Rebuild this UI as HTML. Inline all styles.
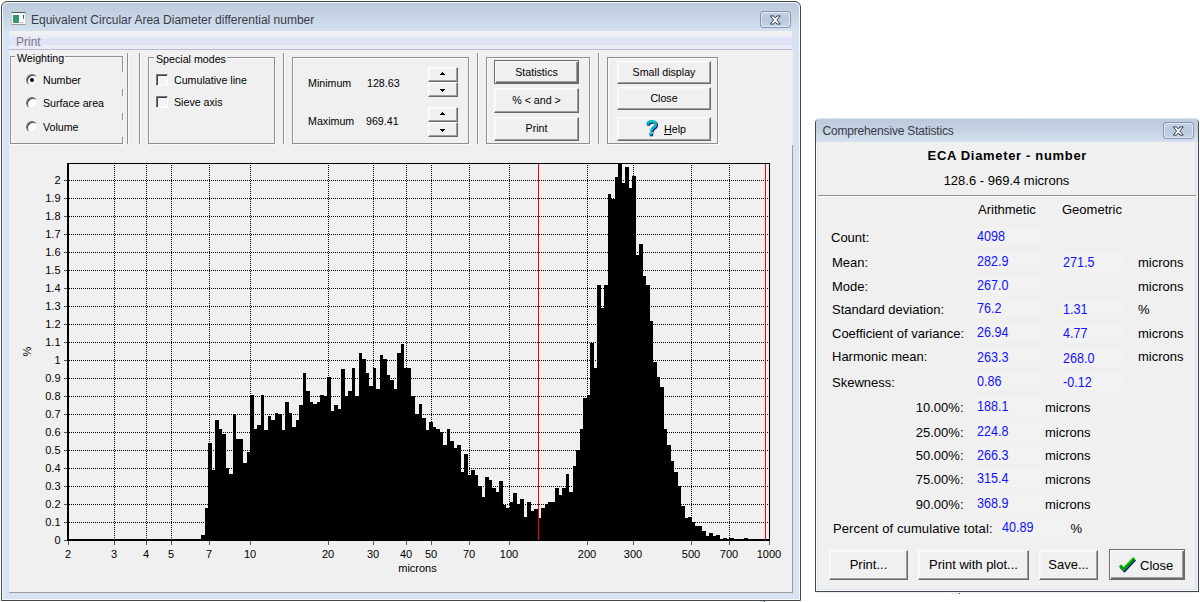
<!DOCTYPE html>
<html><head><meta charset="utf-8"><title>Equivalent Circular Area Diameter differential number</title>
<style>
html,body{margin:0;padding:0;background:#fff;}
body{width:1200px;height:602px;position:relative;overflow:hidden;font-family:"Liberation Sans",Arial,sans-serif;}
.t{position:absolute;white-space:nowrap;line-height:1;}
.win{position:absolute;box-sizing:border-box;border:1px solid #474747;background:#d7e3f2;}
#w1{left:1px;top:1px;width:800px;height:600px;border-radius:6px 6px 0 0;box-shadow:inset 0 0 0 1px rgba(255,255,255,.75);}
#w1 .tb{position:absolute;left:1px;top:1px;right:1px;height:29px;border-radius:5px 5px 0 0;background:linear-gradient(#bccbdd,#c6d4e5 45%,#d6e2f0);}
.abs{position:absolute;}
#menu{position:absolute;left:9px;top:31px;width:783px;height:19px;background:linear-gradient(#f1f1f2 0,#f1f1f2 21%,#e8ebf8 22%,#e8ebf8 36%,#dfe3f5 37%,#dfe3f5 74%,#eaecf8 75%,#eaecf8 94%,#b8bbcf 95%,#b8bbcf 100%);}
#c1{position:absolute;left:9px;top:50px;width:784px;height:543px;background:#f0f0f0;}
#cpanel{position:absolute;left:9px;top:145px;width:784px;height:448px;border-right:1px solid #9c9c9c;border-bottom:1px solid #9c9c9c;box-sizing:border-box;}
.gb{position:absolute;box-sizing:border-box;border:1px solid #8f8f8f;box-shadow:1px 1px 0 #fbfbfb,inset 1px 1px 0 #fbfbfb;}
.vsep{position:absolute;width:1px;background:#8f8f8f;box-shadow:1px 0 0 #fbfbfb;}
.leg{position:absolute;background:#f0f0f0;}
.radio{position:absolute;width:12px;height:12px;box-sizing:border-box;border-radius:50%;background:#fff;border:1px solid;border-color:#7a7a7a #e8e8e8 #e8e8e8 #7a7a7a;box-shadow:inset 1px 1px 0 #404040;}
.radio i{position:absolute;left:3px;top:3px;width:4px;height:4px;border-radius:50%;background:#000;}
.chk{position:absolute;width:12px;height:12px;box-sizing:border-box;background:#f4f4f4;border:1px solid;border-color:#7a7a7a #fff #fff #7a7a7a;box-shadow:inset 1px 1px 0 #404040;}
.btn{position:absolute;box-sizing:border-box;background:#f0f0f0;border:1px solid;border-color:#fcfcfc #6a6a6a #6a6a6a #fcfcfc;box-shadow:inset -1px -1px 0 #9d9d9d,inset 1px 1px 0 #f6f6f6;font-size:10.67px;text-align:center;white-space:nowrap;color:#000;}
.btn.def{border-color:#6c6c6c;box-shadow:inset 1px 1px 0 #fcfcfc,inset -1px -1px 0 #6a6a6a,inset -2px -2px 0 #9d9d9d;}
.btn.big{font-size:13px;}
.btn span{display:inline-block;vertical-align:middle;line-height:1;}
.btn svg{vertical-align:middle;}
.spin{line-height:0;}
.chart{position:absolute;left:0;top:0;}
.ax text{font-family:"Liberation Sans",Arial,sans-serif;font-size:11px;fill:#000;}
.cb{position:absolute;box-sizing:border-box;border:1px solid #8593b2;border-radius:3px;box-shadow:inset 0 0 0 1px rgba(255,255,255,.55);background:linear-gradient(#c3d1e3,#b9c9de 50%,#c6d4e6);display:flex;align-items:center;justify-content:center;}
#w2{left:815px;top:118px;width:384px;height:474px;border-radius:5px 5px 0 0;border-top-color:#dfe6ee;background:#dbe6f4;box-shadow:inset 0 0 0 1px rgba(255,255,255,.8);}
#w2 .tb{position:absolute;left:0;top:0;right:0;height:23px;border-radius:4px 4px 0 0;background:linear-gradient(#bccbdc,#c4d2e3 50%,#d6e2f0);}
#c2{position:absolute;left:2px;top:23px;width:377px;height:447px;background:#f0f0f0;}
.hsep{position:absolute;height:1px;background:#8f8f8f;box-shadow:0 1px 0 #fbfbfb;}
.vf{position:absolute;background:#f2f2f2;}
</style></head><body>
<div class="win" id="w1">
 <div class="tb"></div>
</div>
<div id="menu"></div>
<div id="c1"></div>
<div id="cpanel"></div>
<div class="abs" style="left:11px;top:12px;width:15px;height:13px;box-sizing:border-box;background:#fdfdfd;border-top:1px solid #555;border-bottom:1px solid #999;border-left:1px solid #ccc;border-right:1px solid #ccc;">
  <div class="abs" style="left:1px;top:2px;width:6px;height:8px;background:linear-gradient(#3a8a8a,#3aa060);"></div>
  <div class="abs" style="left:11px;top:2px;width:1px;height:4px;background:linear-gradient(#2244aa,#22aa44);"></div>
  <div class="abs" style="left:8px;top:9px;width:3px;height:1px;background:#bbb;"></div>
</div>
<span class="t" style="font-size:12px;top:14px;color:#3b3b46;left:31px;">Equivalent Circular Area Diameter differential number</span>
<div class="cb" style="left:760px;top:11px;width:31px;height:17px"><svg width="12.500" height="10" viewBox="0 0 13 11"><path d="M1 1h3.600L6.500 3.300 8.400 1H12L8.300 5.500 12 10H8.400L6.500 7.700 4.600 10H1L4.700 5.500z" fill="#fff" stroke="#363e50" stroke-width="1.100" stroke-linejoin="round"/></svg></div>
<span class="t" style="font-size:12px;top:36px;color:#7f7888;left:16px;">Print</span>
<svg class="chart" width="800" height="602" viewBox="0 0 800 602" shape-rendering="crispEdges">
<g stroke="#000" stroke-width="1" stroke-dasharray="1 1"><line x1="114.5" y1="165" x2="114.5" y2="539"/><line x1="146.5" y1="165" x2="146.5" y2="539"/><line x1="171.5" y1="165" x2="171.5" y2="539"/><line x1="209.5" y1="165" x2="209.5" y2="539"/><line x1="250.5" y1="165" x2="250.5" y2="539"/><line x1="328.5" y1="165" x2="328.5" y2="539"/><line x1="373.5" y1="165" x2="373.5" y2="539"/><line x1="406.5" y1="165" x2="406.5" y2="539"/><line x1="431.5" y1="165" x2="431.5" y2="539"/><line x1="469.5" y1="165" x2="469.5" y2="539"/><line x1="509.5" y1="165" x2="509.5" y2="539"/><line x1="587.5" y1="165" x2="587.5" y2="539"/><line x1="633.5" y1="165" x2="633.5" y2="539"/><line x1="691.5" y1="165" x2="691.5" y2="539"/><line x1="729.5" y1="165" x2="729.5" y2="539"/><line x1="69" y1="522.5" x2="768" y2="522.5"/><line x1="69" y1="504.5" x2="768" y2="504.5"/><line x1="69" y1="486.5" x2="768" y2="486.5"/><line x1="69" y1="468.5" x2="768" y2="468.5"/><line x1="69" y1="450.5" x2="768" y2="450.5"/><line x1="69" y1="432.5" x2="768" y2="432.5"/><line x1="69" y1="414.5" x2="768" y2="414.5"/><line x1="69" y1="396.5" x2="768" y2="396.5"/><line x1="69" y1="378.5" x2="768" y2="378.5"/><line x1="69" y1="360.5" x2="768" y2="360.5"/><line x1="69" y1="342.5" x2="768" y2="342.5"/><line x1="69" y1="324.5" x2="768" y2="324.5"/><line x1="69" y1="306.5" x2="768" y2="306.5"/><line x1="69" y1="288.5" x2="768" y2="288.5"/><line x1="69" y1="270.5" x2="768" y2="270.5"/><line x1="69" y1="252.5" x2="768" y2="252.5"/><line x1="69" y1="234.5" x2="768" y2="234.5"/><line x1="69" y1="216.5" x2="768" y2="216.5"/><line x1="69" y1="198.5" x2="768" y2="198.5"/><line x1="69" y1="180.5" x2="768" y2="180.5"/></g>
<path d="M201 535H205V541H201ZM205 508H208V541H205ZM208 443H212V541H208ZM212 470H215V541H212ZM215 420H219V541H215ZM219 429H222V541H219ZM222 434H226V541H222ZM226 468H229V541H226ZM229 474H233V541H229ZM233 414H236V541H233ZM236 439H240V541H236ZM240 439H243V541H240ZM243 463H247V541H243ZM247 452H250V541H247ZM250 395H254V541H250ZM254 429H257V541H254ZM257 425H261V541H257ZM261 395H264V541H261ZM264 430H268V541H264ZM268 416H271V541H268ZM271 420H275V541H271ZM275 413H278V541H275ZM278 414H282V541H278ZM282 430H285V541H282ZM285 402H289V541H285ZM289 413H292V541H289ZM292 427H296V541H292ZM296 420H299V541H296ZM299 405H303V541H299ZM303 373H306V541H303ZM306 391H310V541H306ZM310 402H313V541H310ZM313 404H317V541H313ZM317 402H320V541H317ZM320 395H324V541H320ZM324 396H327V541H324ZM327 377H331V541H327ZM331 411H334V541H331ZM334 405H338V541H334ZM338 409H341V541H338ZM341 369H345V541H341ZM345 396H348V541H345ZM348 391H352V541H348ZM352 368H355V541H352ZM355 396H359V541H355ZM359 353H362V541H359ZM362 359H366V541H362ZM366 373H369V541H366ZM369 386H373V541H369ZM373 368H376V541H373ZM376 389H380V541H376ZM380 355H383V541H380ZM383 359H387V541H383ZM387 375H390V541H387ZM390 380H394V541H390ZM394 389H397V541H394ZM397 353H401V541H397ZM401 344H404V541H401ZM404 368H408V541H404ZM408 368H411V541H408ZM411 396H415V541H411ZM415 414H419V541H415ZM419 404H422V541H419ZM422 418H426V541H422ZM426 430H429V541H426ZM429 422H433V541H429ZM433 427H436V541H433ZM436 429H440V541H436ZM440 432H443V541H440ZM443 445H447V541H443ZM447 429H450V541H447ZM450 441H454V541H450ZM454 448H457V541H454ZM457 445H461V541H457ZM461 472H464V541H461ZM464 454H468V541H464ZM468 475H471V541H468ZM471 470H475V541H471ZM475 475H478V541H475ZM478 486H482V541H478ZM482 497H485V541H482ZM485 477H489V541H485ZM489 480H492V541H489ZM492 488H496V541H492ZM496 492H499V541H496ZM499 481H503V541H499ZM503 505H506V541H503ZM506 508H510V541H506ZM510 502H513V541H510ZM513 493H517V541H513ZM517 504H520V541H517ZM520 499H524V541H520ZM524 517H527V541H524ZM527 502H531V541H527ZM531 511H534V541H531ZM534 509H538V541H534ZM538 518H541V541H538ZM541 508H545V541H541ZM545 504H548V541H545ZM548 502H552V541H548ZM552 502H555V541H552ZM555 488H559V541H555ZM559 495H562V541H559ZM562 488H566V541H562ZM566 474H569V541H566ZM569 492H573V541H569ZM573 466H576V541H573ZM576 450H580V541H576ZM580 429H583V541H580ZM583 398H587V541H583ZM587 395H590V541H587ZM590 343H594V541H590ZM594 368H597V541H594ZM597 285H601V541H597ZM601 308H604V541H601ZM604 285H608V541H604ZM608 194H611V541H608ZM611 199H615V541H611ZM615 177H618V541H615ZM618 163H622V541H618ZM622 183H625V541H622ZM625 167H629V541H625ZM629 188H632V541H629ZM632 176H636V541H632ZM636 255H639V541H636ZM639 244H643V541H639ZM643 276H646V541H643ZM646 285H650V541H646ZM650 321H653V541H650ZM653 362H657V541H653ZM657 377H660V541H657ZM660 387H664V541H660ZM664 429H667V541H664ZM667 445H671V541H667ZM671 461H674V541H671ZM674 472H678V541H674ZM678 486H681V541H678ZM681 506H685V541H681ZM685 518H688V541H685ZM688 517H692V541H688ZM692 522H695V541H692ZM695 526H699V541H695ZM699 526H702V541H699ZM702 531H706V541H702ZM706 536H709V541H706ZM709 533H713V541H709ZM713 536H716V541H713ZM716 535H720V541H716ZM723 538H727V541H723ZM729 538H734V541H729ZM744 538H748V541H744Z" fill="#000"/>
<rect x="67" y="163" width="2" height="378" fill="#000"/>
<rect x="67" y="539" width="703" height="2" fill="#000"/>
<rect x="67" y="163" width="703" height="1" fill="#000"/>
<rect x="769" y="163" width="1" height="378" fill="#000"/>
<rect x="538" y="164" width="1" height="376" fill="#f00"/>
<rect x="765" y="164" width="1" height="376" fill="#f00"/>
<g fill="#555"><rect x="68" y="541" width="1" height="4"/><rect x="114" y="541" width="1" height="4"/><rect x="146" y="541" width="1" height="4"/><rect x="171" y="541" width="1" height="4"/><rect x="209" y="541" width="1" height="4"/><rect x="250" y="541" width="1" height="4"/><rect x="328" y="541" width="1" height="4"/><rect x="373" y="541" width="1" height="4"/><rect x="406" y="541" width="1" height="4"/><rect x="431" y="541" width="1" height="4"/><rect x="469" y="541" width="1" height="4"/><rect x="509" y="541" width="1" height="4"/><rect x="587" y="541" width="1" height="4"/><rect x="633" y="541" width="1" height="4"/><rect x="691" y="541" width="1" height="4"/><rect x="729" y="541" width="1" height="4"/><rect x="769" y="541" width="1" height="4"/><rect x="64" y="540" width="3" height="1"/><rect x="64" y="522" width="3" height="1"/><rect x="64" y="504" width="3" height="1"/><rect x="64" y="486" width="3" height="1"/><rect x="64" y="468" width="3" height="1"/><rect x="64" y="450" width="3" height="1"/><rect x="64" y="432" width="3" height="1"/><rect x="64" y="414" width="3" height="1"/><rect x="64" y="396" width="3" height="1"/><rect x="64" y="378" width="3" height="1"/><rect x="64" y="360" width="3" height="1"/><rect x="64" y="342" width="3" height="1"/><rect x="64" y="324" width="3" height="1"/><rect x="64" y="306" width="3" height="1"/><rect x="64" y="288" width="3" height="1"/><rect x="64" y="270" width="3" height="1"/><rect x="64" y="252" width="3" height="1"/><rect x="64" y="234" width="3" height="1"/><rect x="64" y="216" width="3" height="1"/><rect x="64" y="198" width="3" height="1"/><rect x="64" y="180" width="3" height="1"/></g>
<g class="ax" shape-rendering="auto"><text x="68" y="558" text-anchor="middle">2</text><text x="114" y="558" text-anchor="middle">3</text><text x="146" y="558" text-anchor="middle">4</text><text x="171" y="558" text-anchor="middle">5</text><text x="209" y="558" text-anchor="middle">7</text><text x="250" y="558" text-anchor="middle">10</text><text x="328" y="558" text-anchor="middle">20</text><text x="373" y="558" text-anchor="middle">30</text><text x="406" y="558" text-anchor="middle">40</text><text x="431" y="558" text-anchor="middle">50</text><text x="469" y="558" text-anchor="middle">70</text><text x="509" y="558" text-anchor="middle">100</text><text x="587" y="558" text-anchor="middle">200</text><text x="633" y="558" text-anchor="middle">300</text><text x="691" y="558" text-anchor="middle">500</text><text x="729" y="558" text-anchor="middle">700</text><text x="769" y="558" text-anchor="middle">1000</text><text x="60.5" y="544" text-anchor="end">0</text><text x="60.5" y="526" text-anchor="end">0.1</text><text x="60.5" y="508" text-anchor="end">0.2</text><text x="60.5" y="490" text-anchor="end">0.3</text><text x="60.5" y="472" text-anchor="end">0.4</text><text x="60.5" y="454" text-anchor="end">0.5</text><text x="60.5" y="436" text-anchor="end">0.6</text><text x="60.5" y="418" text-anchor="end">0.7</text><text x="60.5" y="400" text-anchor="end">0.8</text><text x="60.5" y="382" text-anchor="end">0.9</text><text x="60.5" y="364" text-anchor="end">1</text><text x="60.5" y="346" text-anchor="end">1.1</text><text x="60.5" y="328" text-anchor="end">1.2</text><text x="60.5" y="310" text-anchor="end">1.3</text><text x="60.5" y="292" text-anchor="end">1.4</text><text x="60.5" y="274" text-anchor="end">1.5</text><text x="60.5" y="256" text-anchor="end">1.6</text><text x="60.5" y="238" text-anchor="end">1.7</text><text x="60.5" y="220" text-anchor="end">1.8</text><text x="60.5" y="202" text-anchor="end">1.9</text><text x="60.5" y="184" text-anchor="end">2</text>
<text x="417.5" y="572" text-anchor="middle">microns</text>
<text x="0" y="0" text-anchor="middle" transform="translate(30.5,351.5) rotate(-90)">%</text>
</g>
</svg>
<div class="gb" style="left:10px;top:56px;width:113px;height:88px;"></div><div class="gb" style="left:148px;top:57px;width:127px;height:87px;"></div><div class="gb" style="left:292px;top:57px;width:177px;height:87px;"></div><div class="gb" style="left:486px;top:57px;width:104px;height:87px;"></div><div class="gb" style="left:607px;top:57px;width:111px;height:87px;"></div><div class="vsep" style="left:127px;top:53px;height:91px"></div><div class="vsep" style="left:139px;top:53px;height:91px"></div><div class="vsep" style="left:283px;top:53px;height:91px"></div><div class="vsep" style="left:477px;top:53px;height:91px"></div><div class="vsep" style="left:598px;top:53px;height:91px"></div><span class="leg" style="left:122px;top:72px;width:2px;height:17px"></span><span class="leg" style="left:122px;top:96px;width:2px;height:17px"></span><span class="leg" style="left:122px;top:120px;width:2px;height:17px"></span><span class="leg" style="left:15px;top:52px;width:50px;height:10px"></span><span class="leg" style="left:154px;top:53px;width:73px;height:10px"></span><span class="t" style="font-size:10.67px;top:53px;color:#000;left:17px;">Weighting</span><span class="t" style="font-size:10.67px;top:54px;color:#000;left:156px;">Special modes</span><div class="radio" style="left:26px;top:74px"><i></i></div><span class="t" style="font-size:10.67px;top:75px;color:#000;left:43px;">Number</span><div class="radio" style="left:26px;top:97px"></div><span class="t" style="font-size:10.67px;top:98px;color:#000;left:43px;">Surface area</span><div class="radio" style="left:26px;top:121px"></div><span class="t" style="font-size:10.67px;top:122px;color:#000;left:43px;">Volume</span><div class="chk" style="left:156px;top:74px"></div><span class="t" style="font-size:10.67px;top:75px;color:#000;left:174px;">Cumulative line</span><div class="chk" style="left:156px;top:96px"></div><span class="t" style="font-size:10.67px;top:97px;color:#000;left:174px;">Sieve axis</span><span class="t" style="font-size:10.67px;top:78px;color:#000;left:308px;">Minimum</span><span class="t" style="font-size:10.67px;top:78px;color:#000;left:367px;">128.63</span><span class="t" style="font-size:10.67px;top:116px;color:#000;left:308px;">Maximum</span><span class="t" style="font-size:10.67px;top:116px;color:#000;left:366px;">969.41</span><div class="btn spin" style="left:428px;top:67px;width:30px;height:15px"><svg width="5" height="3" viewBox="0 0 5 3" shape-rendering="crispEdges" style="position:absolute;left:11px;top:4px"><path d="M2 0h1v1h1v1h1v1H0V2h1V1h1z" fill="#000"/></svg></div><div class="btn spin" style="left:428px;top:82px;width:30px;height:15px"><svg width="5" height="3" viewBox="0 0 5 3" shape-rendering="crispEdges" style="position:absolute;left:11px;top:6px"><path d="M0 0h5v1H4v1H3v1H2V2H1V1H0z" fill="#000"/></svg></div><div class="btn spin" style="left:428px;top:107px;width:30px;height:15px"><svg width="5" height="3" viewBox="0 0 5 3" shape-rendering="crispEdges" style="position:absolute;left:11px;top:4px"><path d="M2 0h1v1h1v1h1v1H0V2h1V1h1z" fill="#000"/></svg></div><div class="btn spin" style="left:428px;top:122px;width:30px;height:15px"><svg width="5" height="3" viewBox="0 0 5 3" shape-rendering="crispEdges" style="position:absolute;left:11px;top:6px"><path d="M0 0h5v1H4v1H3v1H2V2H1V1H0z" fill="#000"/></svg></div><div class="btn def" style="left:494px;top:60px;width:85px;height:24px;line-height:21px"><span>Statistics</span></div><div class="btn" style="left:494px;top:88px;width:85px;height:25px;line-height:20px"><span>% &lt; and &gt;</span></div><div class="btn" style="left:494px;top:117px;width:85px;height:24px;line-height:19px"><span>Print</span></div><div class="btn" style="left:617px;top:61px;width:94px;height:23px;line-height:18px"><span>Small display</span></div><div class="btn" style="left:617px;top:87px;width:94px;height:23px;line-height:18px"><span>Close</span></div><div class="btn" style="left:617px;top:117px;width:94px;height:24px;line-height:19px"><svg class="q" style="position:absolute;left:28px;top:2px" width="13" height="17.700" viewBox="0 0 14 19"><g transform="translate(1,1)" stroke="#101088" fill="#101088"><path d="M1.6 5.2C1.6 2.600 3.600 1.500 6.400 1.500 9.300 1.500 10.500 2.900 10.500 4.500 10.500 6.300 9.200 7.300 7.800 8.300 6.500 9.200 5.900 10 5.600 12.200" fill="none" stroke-width="3"/><path d="M3.600 13.400h3.400l-.5 3h-3.400z" stroke="none"/></g><g stroke="#10b8b8" fill="#10b8b8"><path d="M1.6 5.2C1.6 2.600 3.600 1.500 6.400 1.500 9.300 1.500 10.500 2.900 10.500 4.500 10.500 6.300 9.200 7.300 7.800 8.300 6.500 9.200 5.900 10 5.600 12.200" fill="none" stroke-width="3"/><path d="M3.600 13.400h3.400l-.5 3h-3.400z" stroke="none"/></g></svg><span style="position:absolute;left:46px;top:6px"><u>H</u>elp</span></div>
<div class="win" id="w2">
 <div class="tb"></div>
 <div id="c2"></div>
 <div class="hsep" style="left:2px;top:76px;width:378px"></div>
 <span class="t" style="font-size:12px;top:6px;color:#3b3b46;letter-spacing:-0.18px;left:6.5px;">Comprehensive Statistics</span>
 <div class="cb" style="left:347px;top:3px;width:31px;height:17px"><svg width="12.500" height="10" viewBox="0 0 13 11"><path d="M1 1h3.600L6.500 3.300 8.400 1H12L8.300 5.500 12 10H8.400L6.500 7.700 4.600 10H1L4.700 5.500z" fill="#fff" stroke="#363e50" stroke-width="1.100" stroke-linejoin="round"/></svg></div>
 <span class="t" style="font-size:13px;top:30px;color:#000;font-weight:bold;letter-spacing:0.67px;left:191.29999999999995px;transform:translateX(-50%);">ECA Diameter - number</span><span class="t" style="font-size:13px;top:55px;color:#000;left:190.5px;transform:translateX(-50%);">128.6 - 969.4 microns</span><span class="t" style="font-size:13px;top:84px;color:#000;left:162px;">Arithmetic</span><span class="t" style="font-size:13px;top:84px;color:#000;left:246px;">Geometric</span><span class="t" style="font-size:13px;top:112px;color:#000;left:15px;">Count:</span><div class="vf" style="left:159px;top:108.0px;width:66px;height:18px"></div><span class="t" style="font-size:14px;top:110px;color:#1212ff;transform:scaleX(0.9);transform-origin:0 50%;left:160.5px;">4098</span><span class="t" style="font-size:13px;top:137px;color:#000;left:16px;">Mean:</span><div class="vf" style="left:159px;top:133.0px;width:66px;height:18px"></div><span class="t" style="font-size:14px;top:135px;color:#1212ff;transform:scaleX(0.9);transform-origin:0 50%;left:160.5px;">282.9</span><div class="vf" style="left:245px;top:134.0px;width:64px;height:18px"></div><span class="t" style="font-size:14px;top:136px;color:#1212ff;transform:scaleX(0.9);transform-origin:0 50%;left:246.5px;">271.5</span><span class="t" style="font-size:13px;top:137px;color:#000;left:322px;">microns</span><span class="t" style="font-size:13px;top:161px;color:#000;left:16px;">Mode:</span><div class="vf" style="left:159px;top:157.0px;width:66px;height:18px"></div><span class="t" style="font-size:14px;top:159px;color:#1212ff;transform:scaleX(0.9);transform-origin:0 50%;left:160.5px;">267.0</span><span class="t" style="font-size:13px;top:161px;color:#000;left:322px;">microns</span><span class="t" style="font-size:13px;top:184px;color:#000;left:16px;">Standard deviation:</span><div class="vf" style="left:159px;top:180.0px;width:66px;height:18px"></div><span class="t" style="font-size:14px;top:182px;color:#1212ff;transform:scaleX(0.9);transform-origin:0 50%;left:160.5px;">76.2</span><div class="vf" style="left:245px;top:181.0px;width:64px;height:18px"></div><span class="t" style="font-size:14px;top:183px;color:#1212ff;transform:scaleX(0.9);transform-origin:0 50%;left:246.5px;">1.31</span><span class="t" style="font-size:13px;top:184px;color:#000;left:322px;">%</span><span class="t" style="font-size:13px;top:208px;color:#000;left:16px;">Coefficient of variance:</span><div class="vf" style="left:159px;top:204.0px;width:66px;height:18px"></div><span class="t" style="font-size:14px;top:206px;color:#1212ff;transform:scaleX(0.9);transform-origin:0 50%;left:160.5px;">26.94</span><div class="vf" style="left:245px;top:205.0px;width:64px;height:18px"></div><span class="t" style="font-size:14px;top:207px;color:#1212ff;transform:scaleX(0.9);transform-origin:0 50%;left:246.5px;">4.77</span><span class="t" style="font-size:13px;top:208px;color:#000;left:322px;">microns</span><span class="t" style="font-size:13px;top:231px;color:#000;left:16px;">Harmonic mean:</span><div class="vf" style="left:159px;top:229.0px;width:66px;height:18px"></div><span class="t" style="font-size:14px;top:231px;color:#1212ff;transform:scaleX(0.9);transform-origin:0 50%;left:160.5px;">263.3</span><div class="vf" style="left:245px;top:230.0px;width:64px;height:18px"></div><span class="t" style="font-size:14px;top:232px;color:#1212ff;transform:scaleX(0.9);transform-origin:0 50%;left:246.5px;">268.0</span><span class="t" style="font-size:13px;top:231px;color:#000;left:322px;">microns</span><span class="t" style="font-size:13px;top:257px;color:#000;left:16px;">Skewness:</span><div class="vf" style="left:159px;top:253.0px;width:66px;height:18px"></div><span class="t" style="font-size:14px;top:255px;color:#1212ff;transform:scaleX(0.9);transform-origin:0 50%;left:160.5px;">0.86</span><div class="vf" style="left:245px;top:254.0px;width:64px;height:18px"></div><span class="t" style="font-size:14px;top:256px;color:#1212ff;transform:scaleX(0.9);transform-origin:0 50%;left:246.5px;">-0.12</span><span class="t" style="font-size:13px;top:282px;color:#000;right:234.5px;">10.00%:</span><div class="vf" style="left:159px;top:278.0px;width:66px;height:18px"></div><span class="t" style="font-size:14px;top:280px;color:#1212ff;transform:scaleX(0.9);transform-origin:0 50%;left:160.5px;">188.1</span><span class="t" style="font-size:13px;top:282px;color:#000;left:229px;">microns</span><span class="t" style="font-size:13px;top:307px;color:#000;right:234.5px;">25.00%:</span><div class="vf" style="left:159px;top:303.0px;width:66px;height:18px"></div><span class="t" style="font-size:14px;top:305px;color:#1212ff;transform:scaleX(0.9);transform-origin:0 50%;left:160.5px;">224.8</span><span class="t" style="font-size:13px;top:307px;color:#000;left:229px;">microns</span><span class="t" style="font-size:13px;top:330px;color:#000;right:234.5px;">50.00%:</span><div class="vf" style="left:159px;top:327.0px;width:66px;height:18px"></div><span class="t" style="font-size:14px;top:329px;color:#1212ff;transform:scaleX(0.9);transform-origin:0 50%;left:160.5px;">266.3</span><span class="t" style="font-size:13px;top:330px;color:#000;left:229px;">microns</span><span class="t" style="font-size:13px;top:354px;color:#000;right:234.5px;">75.00%:</span><div class="vf" style="left:159px;top:350.0px;width:66px;height:18px"></div><span class="t" style="font-size:14px;top:352px;color:#1212ff;transform:scaleX(0.9);transform-origin:0 50%;left:160.5px;">315.4</span><span class="t" style="font-size:13px;top:354px;color:#000;left:229px;">microns</span><span class="t" style="font-size:13px;top:379px;color:#000;right:234.5px;">90.00%:</span><div class="vf" style="left:159px;top:375.0px;width:66px;height:18px"></div><span class="t" style="font-size:14px;top:377px;color:#1212ff;transform:scaleX(0.9);transform-origin:0 50%;left:160.5px;">368.9</span><span class="t" style="font-size:13px;top:379px;color:#000;left:229px;">microns</span><span class="t" style="font-size:13px;top:403px;color:#000;letter-spacing:0.1px;left:17px;">Percent of cumulative total:</span><div class="vf" style="left:184px;top:398.6px;width:66px;height:18px"></div><span class="t" style="font-size:14px;top:401px;color:#1212ff;transform:scaleX(0.9);transform-origin:0 50%;left:186px;">40.89</span><span class="t" style="font-size:13px;top:403px;color:#000;left:254.5px;">%</span><div class="btn big" style="left:13px;top:431px;width:79px;height:30px;line-height:25px"><span>Print...</span></div><div class="btn big" style="left:102px;top:431px;width:111px;height:30px;line-height:25px"><span>Print with plot...</span></div><div class="btn big" style="left:223px;top:431px;width:59px;height:30px;line-height:25px"><span>Save...</span></div><div class="btn big def" style="left:293px;top:430px;width:76px;height:31px;line-height:28px"><svg style="position:absolute;left:8px;top:4.500px" width="19" height="18" viewBox="0 0 19 18" fill="none" stroke-width="3" stroke-linejoin="miter"><path d="M2.200 10.800 6 14.600 16.400 3.600" stroke="#0a0a80" transform="translate(.5,.9)"/><path d="M2.200 10.800 6 14.600 16.400 3.600" stroke="#10e010" transform="translate(-.3,-.6)"/><path d="M2.200 10.800 6 14.600 16.400 3.600" stroke="#089808" stroke-width="2.400"/></svg><span style="position:absolute;left:30px;top:9px">Close</span></div>
</div>
<div class="abs" style="left:760px;top:601px;width:4px;height:1px;background:#dde7f4"></div>
<div class="abs" style="left:764px;top:601px;width:1px;height:1px;background:#444"></div>
<div class="abs" style="left:952px;top:592px;width:7px;height:2px;background:#dde7f4"></div>
<div class="abs" style="left:959px;top:592px;width:1px;height:2px;background:#444"></div>
<div class="abs" style="left:815px;top:592px;width:384px;height:1px;background:#f0f0f0"></div>
</body></html>
